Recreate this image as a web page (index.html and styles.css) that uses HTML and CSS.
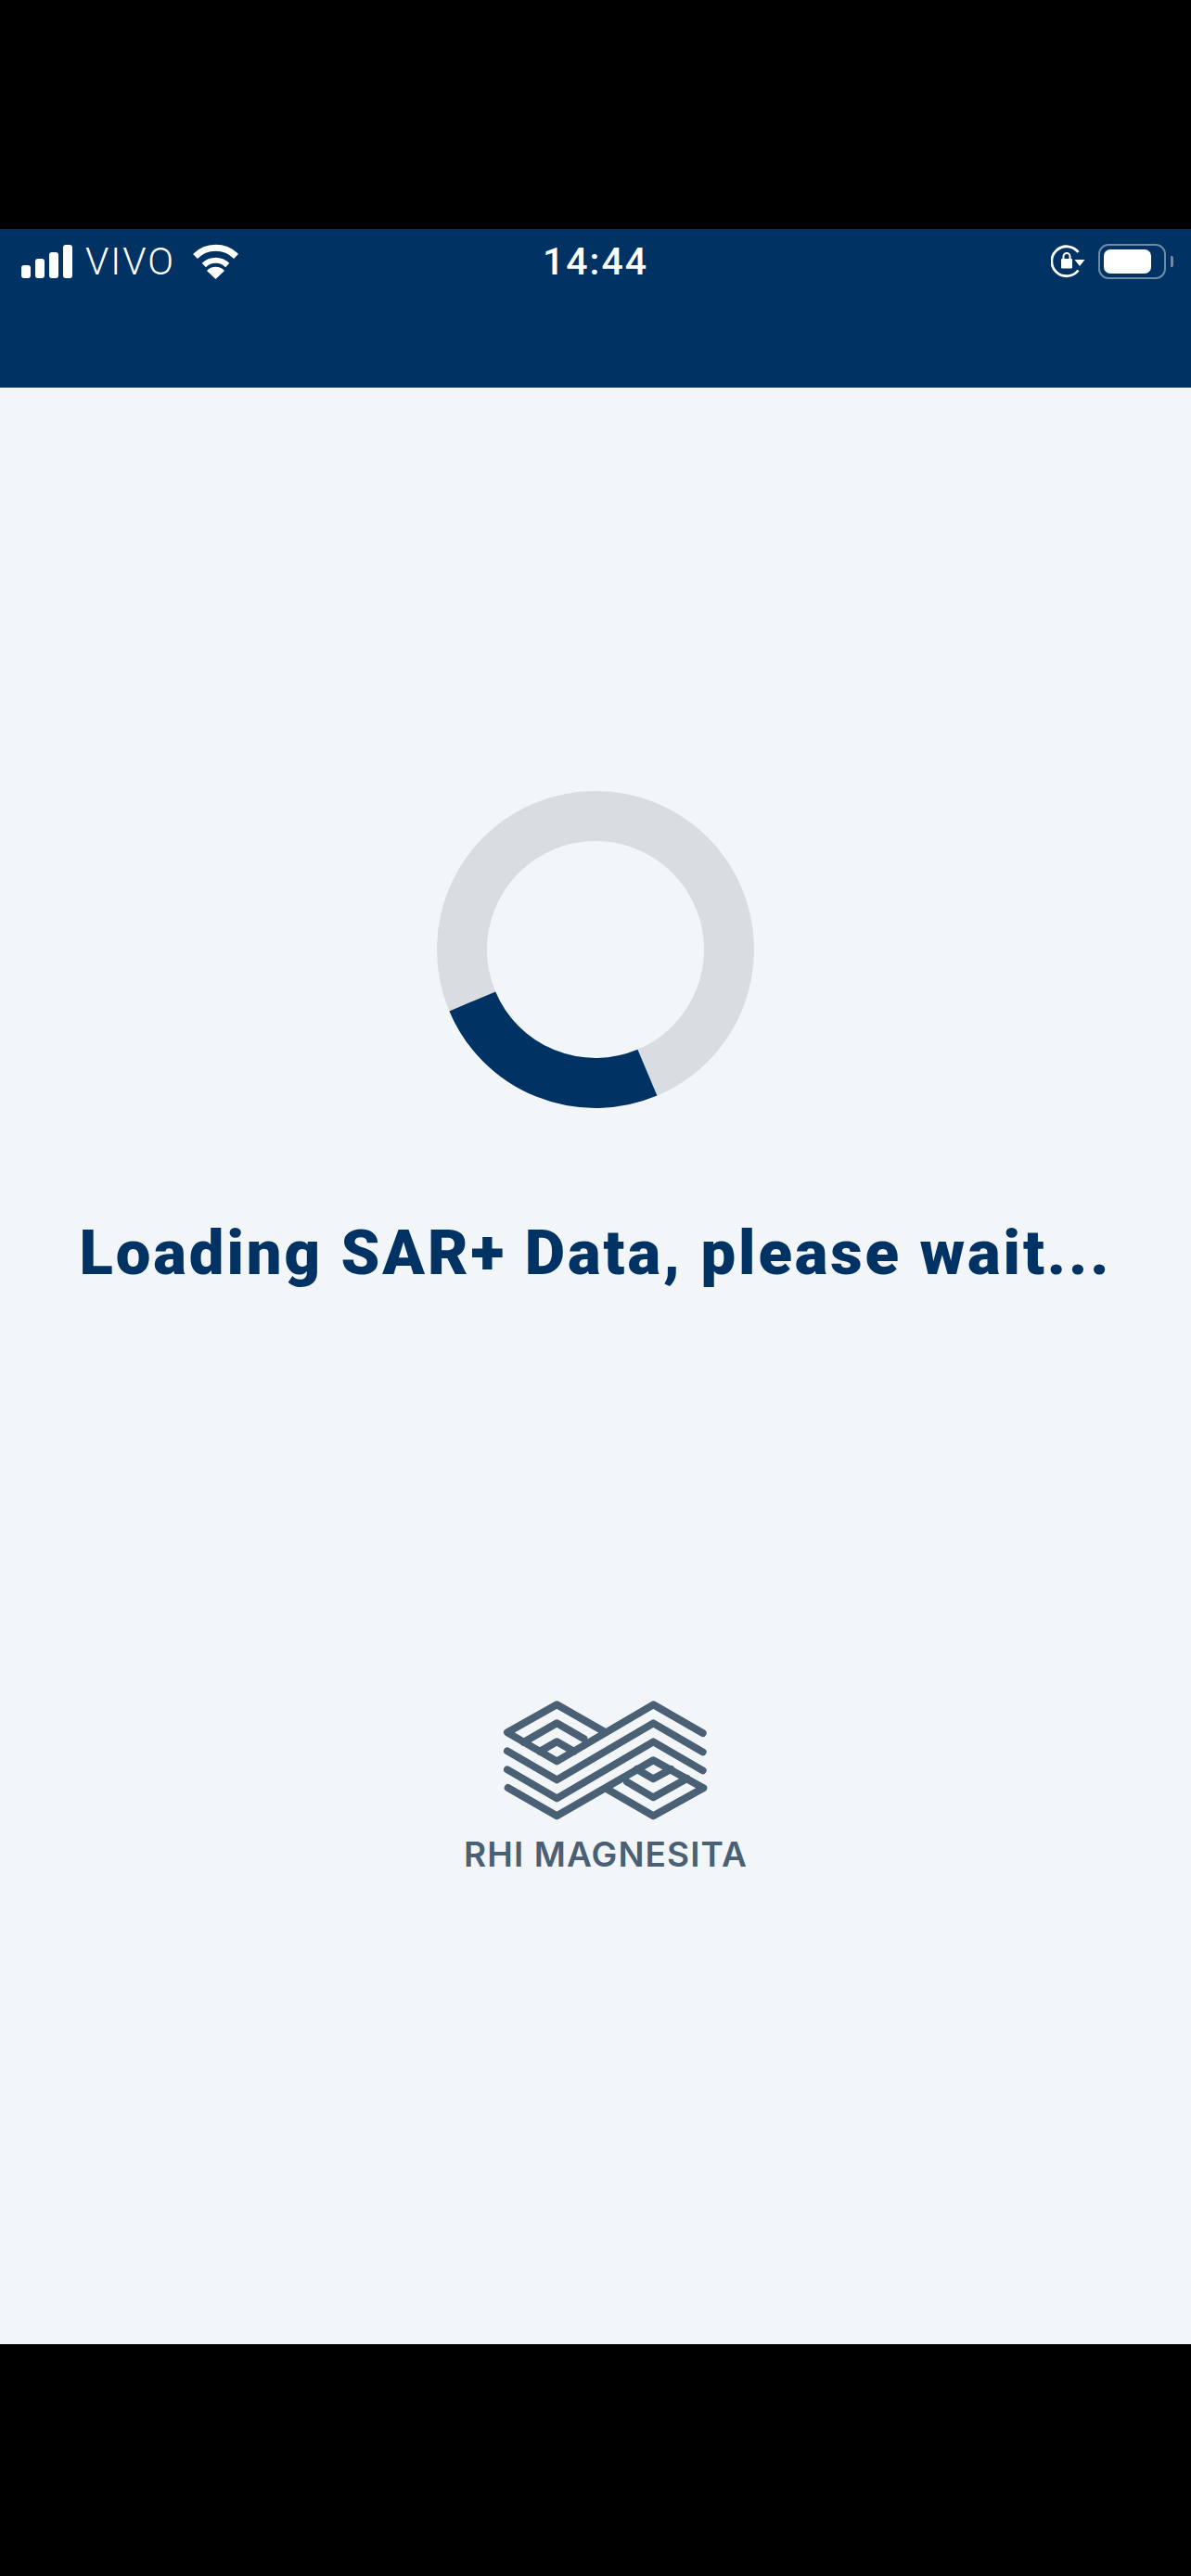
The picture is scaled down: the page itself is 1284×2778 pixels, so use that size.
FILE: index.html
```html
<!DOCTYPE html>
<html lang="en">
<head>
    <meta charset="utf-8">
    <title>SAR+</title>
    <link rel="stylesheet" href="styles.css">
</head>
<body>
    <div class="black-top"></div>
    <header class="app-header">
        <div class="status-bar">
            <div class="status-left">
                <div class="signal">
                    <span class="bar b1"></span>
                    <span class="bar b2"></span>
                    <span class="bar b3"></span>
                    <span class="bar b4"></span>
                </div>
                <span class="carrier">VIVO</span>
                <svg class="wifi" width="51" height="38" viewBox="0 0 51 38">
                    <path d="M3.5 13.5A31 31 0 0 1 47.5 13.5" fill="none" stroke="#fff" stroke-width="7"/>
                    <path d="M12.8 23A18 18 0 0 1 38.2 23" fill="none" stroke="#fff" stroke-width="6"/>
                    <path d="M25.5 38L16 29A13 13 0 0 1 35 29Z" fill="#fff"/>
                </svg>
            </div>
            <div class="clock">14:44</div>
            <div class="status-right">
                <svg class="rotation-lock" width="38" height="36" viewBox="0 0 38 36">
                    <path d="M29.5 8A16 16 0 1 0 29.5 27.5" fill="none" stroke="#fff" stroke-width="2.8"/>
                    <path d="M25.5 16H36.5L31 23Z" fill="#fff"/>
                    <rect x="11" y="15" width="12" height="10.5" rx="1" fill="#fff"/>
                    <path d="M13.5 15V12.5A3.5 3.5 0 0 1 20.5 12.5V15" fill="none" stroke="#fff" stroke-width="2"/>
                </svg>
                <div class="battery">
                    <div class="battery-level"></div>
                </div>
                <div class="battery-nub"></div>
            </div>
        </div>
    </header>
    <main class="loading-screen">
        <svg class="spinner" width="342" height="342" viewBox="0 0 342 342">
            <circle cx="171" cy="171" r="144" fill="none" stroke="#d9dde1" stroke-width="54"/>
            <path d="M38.3 226.9A144 144 0 0 0 226.9 303.7" fill="none" stroke="#003263" stroke-width="54"/>
        </svg>
        <h1 class="loading-title">Loading SAR+ Data, please wait...</h1>
        <div class="brand">
            <svg class="brand-mark" width="222" height="130" viewBox="185 72 666 390">
                <g fill="none" stroke="#4a6074" stroke-width="24" stroke-linecap="round" stroke-linejoin="round">
                    <path d="M512 172L360 85L200 175L360 268L672 85L832 177"/>
                    <path d="M200 235L360 328L672 145L832 238"/>
                    <path d="M200 295L360 388L672 205L832 298"/>
                    <path d="M202 354L360 445L672 265L834 355L672 445L522 358"/>
                    <path d="M253 206L360 145L447 195"/>
                    <path d="M305 236L360 205L415 236"/>
                    <path d="M781 324L672 385L587 335"/>
                    <path d="M729 294L672 325L619 294"/>
                </g>
            </svg>
            <div class="brand-name">RHI MAGNESITA</div>
        </div>
    </main>
    <div class="black-bottom"></div>
</body>
</html>
```

FILE: styles.css
```css
body
{
    margin: 0;
    background-color: #000;
    font-family: Roboto, "Liberation Sans", sans-serif;
}
.black-top
{
    height: 247px;
}
.app-header
{
    height: 171px;
    background-color: #003263;
    color: #fff;
}
.status-bar
{
    display: grid;
    grid-template-columns: 1fr auto 1fr;
    align-items: center;
    height: 70px;
    padding: 0 19px 0 23px;
}
.status-left
{
    display: flex;
    align-items: center;
}
.signal
{
    display: flex;
    align-items: flex-end;
    gap: 5px;
    height: 36px;
}
.bar
{
    width: 10px;
    background-color: #fff;
    border-radius: 3px;
}
.b1 { height: 14px; }
.b2 { height: 21px; }
.b3 { height: 28px; }
.b4 { height: 36px; }
.carrier
{
    margin-left: 14px;
    font-size: 41px;
    font-weight: 300;
    line-height: 36px;
    letter-spacing: 2px;
}
.wifi
{
    margin-left: 18px;
}
.clock
{
    margin-right: 4px;
    font-size: 41px;
    font-weight: 500;
    line-height: 36px;
    letter-spacing: 2px;
}
.status-right
{
    display: flex;
    align-items: center;
    justify-content: flex-end;
}
.battery
{
    box-sizing: border-box;
    width: 73px;
    height: 38px;
    margin-left: 13px;
    padding: 4px;
    border: 2px solid #6f8aa6;
    border-radius: 11px;
}
.battery-level
{
    width: 51px;
    height: 26px;
    background-color: #fff;
    border-radius: 7px;
}
.battery-nub
{
    width: 3px;
    height: 12px;
    margin-left: 5px;
    background-color: #6f8aa6;
    border-radius: 0 2px 2px 0;
}
.loading-screen
{
    display: flex;
    flex-direction: column;
    align-items: center;
    box-sizing: border-box;
    height: 2110px;
    padding-top: 435px;
    background-color: #f3f6f9;
}
.loading-title
{
    margin: 116px 0 0 0;
    color: #003263;
    font-size: 67px;
    font-weight: 900;
    line-height: 80px;
    letter-spacing: 2.9px;
    white-space: nowrap;
}
.brand
{
    display: flex;
    flex-direction: column;
    align-items: center;
    margin-top: 443px;
    margin-left: 22px;
}
.brand-mark
{
    display: block;
}
.brand-name
{
    margin-top: 14px;
    color: #4a6074;
    font-family: Inter, sans-serif;
    font-size: 37px;
    font-weight: 600;
    line-height: 44px;
    letter-spacing: 1.1px;
    white-space: nowrap;
}
.black-bottom
{
    height: 250px;
}
```
